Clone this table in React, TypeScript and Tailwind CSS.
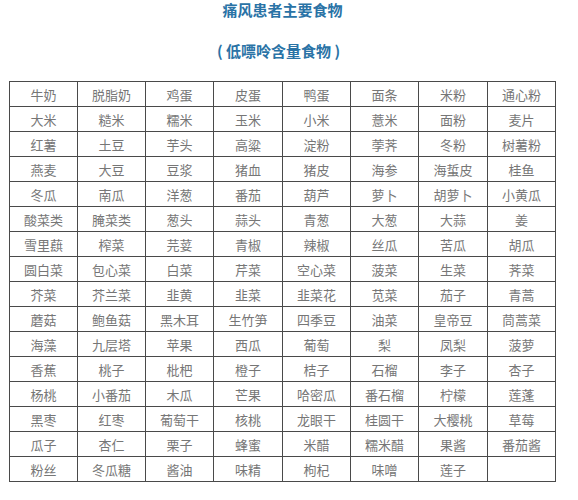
import React from "react";

const rows: string[][] = [
  ["牛奶", "脱脂奶", "鸡蛋", "皮蛋", "鸭蛋", "面条", "米粉", "通心粉"],
  ["大米", "糙米", "糯米", "玉米", "小米", "薏米", "面粉", "麦片"],
  ["红薯", "土豆", "芋头", "高粱", "淀粉", "荸荠", "冬粉", "树薯粉"],
  ["燕麦", "大豆", "豆浆", "猪血", "猪皮", "海参", "海蜇皮", "桂鱼"],
  ["冬瓜", "南瓜", "洋葱", "番茄", "葫芦", "萝卜", "胡萝卜", "小黄瓜"],
  ["酸菜类", "腌菜类", "葱头", "蒜头", "青葱", "大葱", "大蒜", "姜"],
  ["雪里蕻", "榨菜", "芫荽", "青椒", "辣椒", "丝瓜", "苦瓜", "胡瓜"],
  ["圆白菜", "包心菜", "白菜", "芹菜", "空心菜", "菠菜", "生菜", "荠菜"],
  ["芥菜", "芥兰菜", "韭黄", "韭菜", "韭菜花", "苋菜", "茄子", "青蒿"],
  ["蘑菇", "鲍鱼菇", "黑木耳", "生竹笋", "四季豆", "油菜", "皇帝豆", "茼蒿菜"],
  ["海藻", "九层塔", "苹果", "西瓜", "葡萄", "梨", "凤梨", "菠萝"],
  ["香蕉", "桃子", "枇杷", "橙子", "桔子", "石榴", "李子", "杏子"],
  ["杨桃", "小番茄", "木瓜", "芒果", "哈密瓜", "番石榴", "柠檬", "莲蓬"],
  ["黑枣", "红枣", "葡萄干", "核桃", "龙眼干", "桂圆干", "大樱桃", "草莓"],
  ["瓜子", "杏仁", "栗子", "蜂蜜", "米醋", "糯米醋", "果酱", "番茄酱"],
  ["粉丝", "冬瓜糖", "酱油", "味精", "枸杞", "味噌", "莲子", ""],
];

export default function App() {
  return (
    <div
      className="w-[578px] h-[500px] bg-white overflow-hidden"
      style={{ fontFamily: '"Microsoft YaHei", "Noto Sans CJK SC", "Noto Sans", sans-serif' }}
    >
      <div className="ml-[9px] w-[547px] flex flex-col items-center">
        <div className="text-[15px] font-bold leading-[20px] text-[#2a73a6]">
          痛风患者主要食物
        </div>
        <div className="text-[15px] font-bold leading-[20px] text-[#2a73a6] mt-[21px] mr-[8px]">
          ( 低嘌呤含量食物 )
        </div>
        <div className="mt-[20px] grid grid-cols-[68px_68px_68px_69px_68px_68px_69px_68px] border-l border-t border-[#4a4a4a]">
          {rows.flatMap((r, i) =>
            r.map((c, j) => (
              <div
                key={`${i}-${j}`}
                className="h-[25px] border-r border-b border-[#4a4a4a] flex items-center justify-center text-[13px] text-[#767676] leading-none"
              >
                {c}
              </div>
            ))
          )}
        </div>
      </div>
    </div>
  );
}
